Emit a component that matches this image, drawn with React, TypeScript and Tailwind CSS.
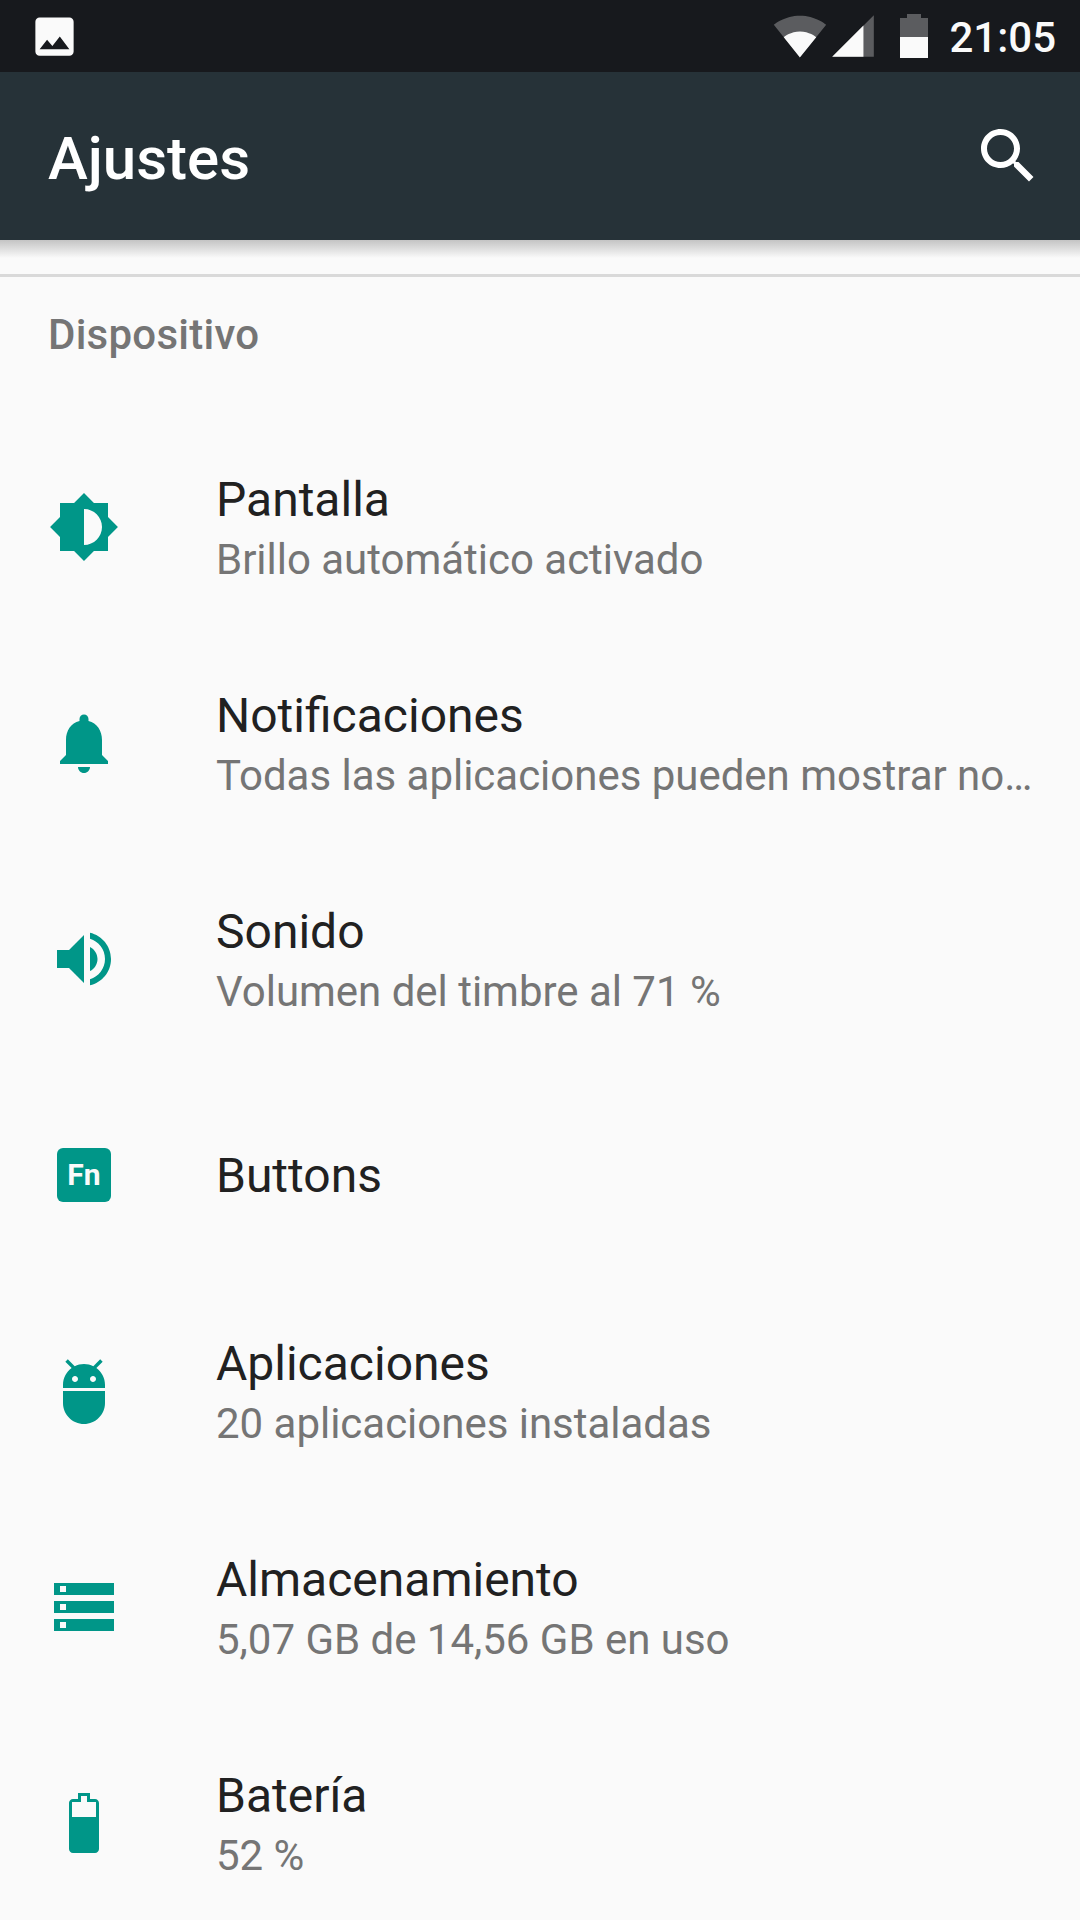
import { ReactNode } from 'react'

function TealIcon({ children }: { children: ReactNode }) {
  return (
    <svg viewBox="0 0 24 24" className="w-[72px] h-[72px] fill-[#009688]">
      {children}
    </svg>
  )
}

const rows: { title: string; summary?: string; icon: ReactNode }[] = [
  {
    title: 'Pantalla',
    summary: 'Brillo automático activado',
    icon: (
      <TealIcon>
        <path d="M20 15.31L23.31 12 20 8.69V4h-4.69L12 .69 8.69 4H4v4.69L.69 12 4 15.31V20h4.69L12 23.31 15.31 20H20v-4.69zM12 18V6c3.31 0 6 2.69 6 6s-2.69 6-6 6z" />
      </TealIcon>
    ),
  },
  {
    title: 'Notificaciones',
    summary: 'Todas las aplicaciones pueden mostrar no…',
    icon: (
      <TealIcon>
        <path d="M12 22c1.1 0 2-.9 2-2h-4c0 1.1.89 2 2 2zm6-6v-5c0-3.07-1.64-5.64-4.5-6.32V4c0-.83-.67-1.5-1.5-1.5s-1.5.67-1.5 1.5v.68C7.63 5.36 6 7.92 6 11v5l-2 2v1h16v-1l-2-2z" />
      </TealIcon>
    ),
  },
  {
    title: 'Sonido',
    summary: 'Volumen del timbre al 71 %',
    icon: (
      <TealIcon>
        <path d="M3 9v6h4l5 5V4L7 9H3zm13.5 3c0-1.77-1.02-3.29-2.5-4.03v8.05c1.48-.73 2.5-2.25 2.5-4.02zM14 3.23v2.06c2.89.86 5 3.54 5 6.71s-2.11 5.85-5 6.71v2.06c4.01-.91 7-4.49 7-8.77s-2.99-7.86-7-8.77z" />
      </TealIcon>
    ),
  },
  {
    title: 'Buttons',
    icon: (
      <div className="w-[72px] h-[72px] flex items-center justify-center">
        <div className="w-[54px] h-[54px] rounded-[6px] bg-[#009688] flex items-center justify-center text-[#fafafa] text-[30px] font-bold leading-none">
          Fn
        </div>
      </div>
    ),
  },
  {
    title: 'Aplicaciones',
    summary: '20 aplicaciones instaladas',
    icon: (
      <TealIcon>
        <path d="M5 16c0 3.87 3.13 7 7 7s7-3.13 7-7v-4H5v4zM16.12 4.37l2.1-2.1-.82-.83-2.3 2.31C14.16 3.28 13.12 3 12 3s-2.16.28-3.09.75L6.6 1.44l-.82.83 2.1 2.1C6.14 5.64 5 7.68 5 10v1h14v-1c0-2.32-1.14-4.36-2.88-5.63zM9 9c-.55 0-1-.45-1-1s.45-1 1-1 1 .45 1 1-.45 1-1 1zm6 0c-.55 0-1-.45-1-1s.45-1 1-1 1 .45 1 1-.45 1-1 1z" />
      </TealIcon>
    ),
  },
  {
    title: 'Almacenamiento',
    summary: '5,07 GB de 14,56 GB en uso',
    icon: (
      <TealIcon>
        <path d="M2 20h20v-4H2v4zm2-3h2v2H4v-2zM2 4v4h20V4H2zm4 3H4V5h2v2zm-4 7h20v-4H2v4zm2-3h2v2H4v-2z" />
      </TealIcon>
    ),
  },
  {
    title: 'Batería',
    summary: '52 %',
    icon: (
      <TealIcon>
        <path
          fillRule="evenodd"
          d="M10 2h4v2h1.67C16.4 4 17 4.6 17 5.33v15.34c0 .73-.6 1.33-1.33 1.33H8.33C7.6 22 7 21.4 7 20.67V5.33C7 4.6 7.6 4 8.33 4H10V2zm1 1v2H8v5h8V5h-3V3h-2z"
        />
      </TealIcon>
    ),
  },
]

export default function App() {
  return (
    <div className="w-[1080px] h-[1920px] overflow-hidden bg-[#fafafa] font-['Roboto',sans-serif]">
      {/* Status bar */}
      <div className="h-[72px] bg-[#17191d] flex items-center pl-[29px] pr-[24px]">
        <svg viewBox="0 0 24 24" className="w-[51px] h-[51px] fill-[#fafafa]">
          <path d="M21 19V5c0-1.1-.9-2-2-2H5c-1.1 0-2 .9-2 2v14c0 1.1.9 2 2 2h14c1.1 0 2-.9 2-2zM8.5 13.5l2.5 3.01L14.5 12l4.5 6H5l3.5-4.5z" />
        </svg>
        <svg viewBox="0 0 24 24" className="w-[54px] h-[54px] fill-[#fafafa] ml-auto">
          <path
            fillOpacity=".3"
            d="M12.01 21.49L23.64 7c-.45-.34-4.93-4-11.64-4C5.28 3 .81 6.66.36 7l11.63 14.5.01.01.01-.02z"
          />
          <path d="M4.79 12.52l7.2 8.98H12l.01-.01 7.2-8.98C18.85 12.24 16.1 10 12 10s-6.85 2.24-7.21 2.52z" />
        </svg>
        <svg viewBox="0 0 24 24" className="w-[50px] h-[50px] fill-[#fafafa] ml-[1px]">
          <path fillOpacity=".3" d="M2 22h20V2z" />
          <path d="M17 7L2 22h15z" />
        </svg>
        <svg viewBox="0 0 28 44" className="w-[28px] h-[44px] fill-[#fafafa] ml-[22px]">
          <path fillOpacity=".3" d="M7 0h14v4h7v19H0V4h7z" />
          <path d="M0 23h28v21H0z" />
        </svg>
        <span className="ml-[21px] pt-[3px] text-[42px] leading-none font-medium text-[#fafafa]">21:05</span>
      </div>

      {/* App bar */}
      <div className="relative h-[168px] bg-[#263238] flex items-center justify-between pl-[48px] pr-[36px]">
        <span className="pt-[5px] text-[60px] leading-none font-medium text-white">Ajustes</span>
        <svg viewBox="0 0 24 24" className="w-[72px] h-[72px] fill-white">
          <path d="M15.5 14h-.79l-.28-.27C15.41 12.59 16 11.11 16 9.5 16 5.91 13.09 3 9.5 3S3 5.91 3 9.5 5.91 16 9.5 16c1.61 0 3.09-.59 4.23-1.57l.27.28v.79l5 4.99L20.49 19l-4.99-5zm-6 0C7.01 14 5 11.99 5 9.5S7.01 5 9.5 5 14 7.01 14 9.5 11.99 14 9.5 14z" />
        </svg>
        <div className="absolute left-0 right-0 top-full h-[18px] bg-gradient-to-b from-[#c4c4c4] to-[#fafafa]" />
      </div>

      {/* Divider and section header */}
      <div className="mt-[34px] h-[3px] bg-[#d9d9d9]" />
      <div className="h-[142px] pl-[48px] pt-[34px] text-[#757575] text-[42px] font-medium leading-[48px] tracking-[0.25px]">
        Dispositivo
      </div>

      {/* Settings rows */}
      <div className="flex flex-col">
        {rows.map((row) => (
          <div key={row.title} className="h-[216px] flex items-center">
            <div className="ml-[48px] w-[168px] shrink-0">{row.icon}</div>
            <div className={row.summary ? 'min-w-0 pt-[6px]' : 'min-w-0 pt-[2px]'}>
              <div className="text-[48px] leading-[60px] text-[#212121]">{row.title}</div>
              {row.summary && (
                <div className="text-[42px] leading-[60px] text-[#757575] whitespace-nowrap tracking-[-0.02px]">{row.summary}</div>
              )}
            </div>
          </div>
        ))}
      </div>
    </div>
  )
}
